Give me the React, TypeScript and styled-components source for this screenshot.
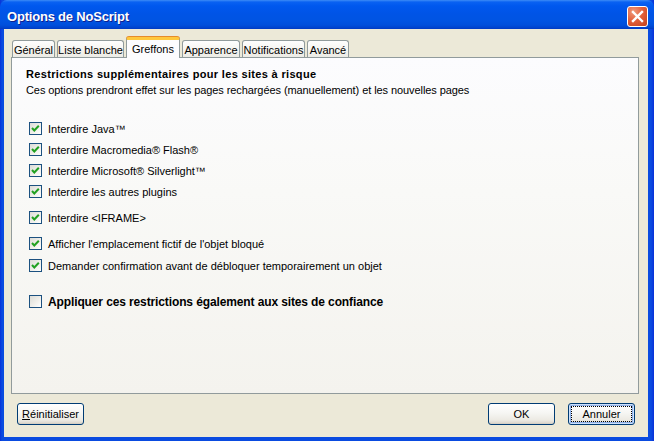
import React from 'react';
import styled, { createGlobalStyle } from 'styled-components';

const GlobalStyle = createGlobalStyle`
  html, body {
    margin: 0;
    padding: 0;
    width: 654px;
    height: 441px;
    overflow: hidden;
  }
  body {
    font-family: 'Liberation Sans', Arial, sans-serif;
    font-size: 11px;
    color: #000;
  }
`;

const tabs = [
  { label: 'Général', width: 43 },
  { label: 'Liste blanche', width: 67 },
  { label: 'Greffons', width: 54, active: true },
  { label: 'Apparence', width: 58 },
  { label: 'Notifications', width: 63 },
  { label: 'Avancé', width: 42 },
];

const options = [
  { label: 'Interdire Java™', checked: true, space: 0 },
  { label: 'Interdire Macromedia® Flash®', checked: true, space: 0 },
  { label: 'Interdire Microsoft® Silverlight™', checked: true, space: 0 },
  { label: 'Interdire les autres plugins', checked: true, space: 0 },
  { label: 'Interdire <IFRAME>', checked: true, space: 5 },
  { label: "Afficher l'emplacement fictif de l'objet bloqué", checked: true, space: 5 },
  { label: 'Demander confirmation avant de débloquer temporairement un objet', checked: true, space: 1 },
  { label: 'Appliquer ces restrictions également aux sites de confiance', checked: false, space: 15, strong: true },
];

const App = () => {
  return (
    <>
      <GlobalStyle />
      <Window>
        <TitleBar>
          <Title>Options de NoScript</Title>
          <CloseButton aria-label="Fermer">
            <svg width="13" height="13" viewBox="0 0 13 13">
              <path d="M2 2 L11 11 M11 2 L2 11" stroke="#fff" strokeWidth="2.4" strokeLinecap="square" />
            </svg>
          </CloseButton>
        </TitleBar>
        <Client>
          <TabStrip>
            {tabs.map((tab) => (
              <Tab key={tab.label} $active={!!tab.active} style={{ width: tab.width }}>
                {tab.label}
              </Tab>
            ))}
          </TabStrip>
          <Panel>
            <Heading>Restrictions supplémentaires pour les sites à risque</Heading>
            <Description>
              Ces options prendront effet sur les pages rechargées (manuellement) et les nouvelles pages
            </Description>
            <OptionList>
              {options.map((opt) => (
                <OptionRow key={opt.label} $space={opt.space}>
                  <CheckBox>
                    {opt.checked && (
                      <svg width="11" height="11" viewBox="0 0 11 11">
                        <polyline
                          points="2,5 4.3,7.5 8.8,2.8"
                          fill="none"
                          stroke="#21a121"
                          strokeWidth="2"
                        />
                      </svg>
                    )}
                  </CheckBox>
                  <OptionLabel $strong={!!opt.strong}>{opt.label}</OptionLabel>
                </OptionRow>
              ))}
            </OptionList>
          </Panel>
          <Footer>
            <Button>
              <u>R</u>éinitialiser
            </Button>
            <ButtonGroup>
              <Button>OK</Button>
              <Button $default>Annuler</Button>
            </ButtonGroup>
          </Footer>
        </Client>
      </Window>
    </>
  );
};

export default App;

const Window = styled.div`
  width: 654px;
  height: 441px;
  display: flex;
  flex-direction: column;
  background: linear-gradient(to right, #0831d9 0, #0a4be0 2px, #0a4be0 calc(100% - 3px), #0831d9 100%);
`;

const TitleBar = styled.div`
  height: 29px;
  flex-shrink: 0;
  box-sizing: border-box;
  padding: 3px 6px 0 7px;
  display: flex;
  align-items: center;
  justify-content: space-between;
  border-radius: 7px 7px 0 0;
  background: linear-gradient(
    to bottom,
    #3d8cf6 0,
    #0a62f2 2px,
    #0058ee 6px,
    #0054e6 14px,
    #0054e3 20px,
    #004fdc 25px,
    #0042cc 28px,
    #0038c0 29px
  );
`;

const Title = styled.span`
  color: #fff;
  font-family: 'Liberation Sans', Arial, sans-serif;
  font-weight: 700;
  font-size: 13px;
  letter-spacing: -0.2px;
  text-shadow: 1px 1px 0 #0f1f8c;
`;

const CloseButton = styled.div`
  width: 21px;
  height: 21px;
  box-sizing: border-box;
  border: 1px solid #fff;
  border-radius: 3px;
  display: flex;
  align-items: center;
  justify-content: center;
  background: radial-gradient(circle at 30% 25%, #f09a7c 0, #e2613c 45%, #c4401b 100%);
`;

const Client = styled.div`
  flex: 1;
  margin: 0 6px 4px 4px;
  background: #ece9d8;
  padding: 8px 9px 0 7px;
  display: flex;
  flex-direction: column;
`;

const TabStrip = styled.div`
  height: 20px;
  display: flex;
  align-items: flex-end;
  gap: 2px;
  padding-left: 1px;
`;

const Tab = styled.div<{ $active: boolean }>`
  box-sizing: border-box;
  height: ${({ $active }) => ($active ? '21px' : '17px')};
  margin-bottom: ${({ $active }) => ($active ? '-1px' : '0')};
  position: relative;
  z-index: ${({ $active }) => ($active ? 1 : 0)};
  display: flex;
  align-items: center;
  justify-content: center;
  padding-top: ${({ $active }) => ($active ? '0' : '1px')};
  border: 1px solid #919b9c;
  border-bottom: none;
  border-top: ${({ $active }) => ($active ? '3px solid #ffc83c' : '1px solid #919b9c')};
  border-radius: 3px 3px 0 0;
  white-space: nowrap;
  background: ${({ $active }) =>
    $active ? '#fcfcfe' : 'linear-gradient(to bottom, #fefefe 0, #f6f5f1 50%, #ecebe5 100%)'};
  box-shadow: ${({ $active }) => ($active ? '0 -1px 0 #e68b2c' : 'none')};
`;

const Panel = styled.div`
  box-sizing: border-box;
  width: 628px;
  height: 337px;
  border: 1px solid #919b9c;
  padding: 8px 14px;
  background: linear-gradient(to bottom, #fcfcfe 0, #f9f9f7 40%, #f4f3ee 100%);
`;

const Heading = styled.div`
  font-weight: 700;
  line-height: 16px;
  letter-spacing: 0.33px;
`;

const Description = styled.div`
  line-height: 16px;
  letter-spacing: -0.08px;
`;

const OptionList = styled.div`
  margin-top: 20px;
  padding-left: 3px;
  display: flex;
  flex-direction: column;
`;

const OptionRow = styled.div<{ $space: number }>`
  height: 21px;
  margin-top: ${({ $space }) => $space}px;
  display: flex;
  align-items: center;
  gap: 6px;
`;

const CheckBox = styled.div`
  width: 13px;
  height: 13px;
  box-sizing: border-box;
  flex-shrink: 0;
  border: 1px solid #1c5180;
  display: flex;
  align-items: center;
  justify-content: center;
  background: linear-gradient(135deg, #dcdcd7 0, #f0efea 55%, #ffffff 100%);
`;

const OptionLabel = styled.span<{ $strong: boolean }>`
  font-weight: ${({ $strong }) => ($strong ? 700 : 400)};
  font-size: ${({ $strong }) => ($strong ? '12px' : '11px')};
  letter-spacing: ${({ $strong }) => ($strong ? '-0.12px' : '0')};
  white-space: nowrap;
`;

const Footer = styled.div`
  margin: 9px 4px 0 6px;
  display: flex;
  justify-content: space-between;
`;

const ButtonGroup = styled.div`
  display: flex;
  gap: 13px;
`;

const Button = styled.div<{ $default?: boolean }>`
  position: relative;
  width: 67px;
  height: 22px;
  box-sizing: border-box;
  display: flex;
  align-items: center;
  justify-content: center;
  border: 1px solid #003c74;
  border-radius: 3px;
  background: linear-gradient(to bottom, #ffffff 0, #f6f6f3 45%, #eceae3 80%, #d8d3c8 100%);
  box-shadow: ${({ $default }) =>
    $default ? 'inset 0 0 0 1px #cde0fb, inset 0 0 0 2px #8eb0e8' : 'inset 0 -1px 0 #d6d0c5'};
  u {
    text-decoration: underline;
  }
  ${({ $default }) =>
    $default
      ? `&::after {
    content: '';
    position: absolute;
    inset: 2px;
    border: 1px dotted #000;
  }`
      : ''}
`;
